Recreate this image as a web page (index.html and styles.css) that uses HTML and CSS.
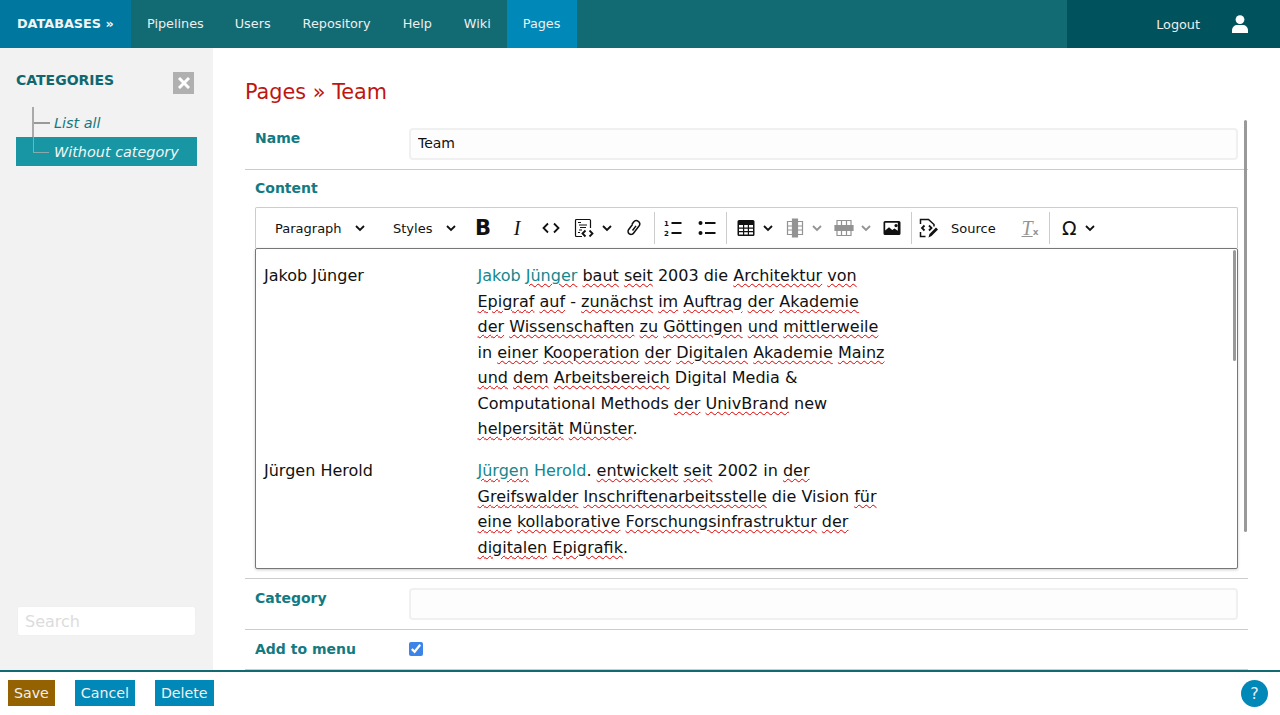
FILE: index.html
```html
<!DOCTYPE html>
<html lang="de">
<head>
    <meta charset="UTF-8">
    <meta name="viewport" content="width=device-width, initial-scale=1.0">
    <title>Pages » Team</title>
    <link rel="stylesheet" href="styles.css">
</head>
<body>
    <header class="topbar">
        <a class="brand">DATABASES »</a>
        <nav class="nav-main">
            <a>Pipelines</a>
            <a>Users</a>
            <a>Repository</a>
            <a>Help</a>
            <a>Wiki</a>
            <a class="active">Pages</a>
        </nav>
        <nav class="nav-user">
            <a>Logout</a>
            <svg class="user-icon" viewBox="0 0 16 18"><circle cx="8" cy="4.6" r="4.4"/><path d="M0 18v-2.5C0 12 2.5 10 5.5 10h5c3 0 5.500 2 5.500 5.500V18z"/></svg>
        </nav>
    </header>

    <div class="layout">
        <aside class="sidebar">
            <div class="side-head">
                <h2>CATEGORIES</h2>
                <button class="side-close"><svg viewBox="0 0 12 12"><path d="M1 1l10 10M11 1L1 11"/></svg></button>
            </div>
            <ul class="tree">
                <li>List all</li>
                <li class="selected">Without category</li>
            </ul>
            <input class="side-search" type="text" placeholder="Search">
        </aside>

        <main class="content">
            <h1 class="page-title">Pages » Team</h1>
            <form class="doc-form">
                <div class="row">
                    <label>Name</label>
                    <input class="field" type="text" value="Team">
                </div>
                <div class="row row-stack">
                    <label>Content</label>
                    <div class="toolbar">
                        <div class="drop drop-para">Paragraph<svg class="chev" viewBox="0 0 10 10"><path d="M1 3l4 4 4-4"/></svg></div>
                        <div class="drop drop-styles">Styles<svg class="chev" viewBox="0 0 10 10"><path d="M1 3l4 4 4-4"/></svg></div>
                        <div class="tool tool-b">B</div>
                        <div class="tool tool-i">I</div>
                        <div class="tool"><svg class="ico" viewBox="0 0 20 20"><path class="ln" d="M7 5.500L2.500 10 7 14.500M13 5.500l4.500 4.500-4.500 4.500"/></svg></div>
                        <div class="split split-code">
                            <svg class="ico" viewBox="0 0 20 20"><path class="thin" d="M8 18.500H2.500a1 1 0 0 1-1-1v-15a1 1 0 0 1 1-1h13a1 1 0 0 1 1 1V10"/><path class="thin" d="M4 4.500h3M5 7h8M6 9.500h6M5 12h3M4 14.500h2"/><path class="ln" d="M11.500 12.500l-3 3 3 3M15.500 12.500l3 3-3 3"/></svg>
                            <svg class="chev" viewBox="0 0 10 10"><path d="M1 3l4 4 4-4"/></svg>
                        </div>
                        <div class="tool"><svg class="ico" viewBox="0 0 20 20"><path class="mid" d="M8.500 6.500l-3.800 5a3 3 0 0 0 .6 4.300 3 3 0 0 0 4.200-.6l5.500-7.200a3.400 3.400 0 0 0-.7-4.700 3.400 3.400 0 0 0-4.700.7L8 6.200M8.500 12.500l3.500-4.600"/></svg></div>
                        <span class="sep"></span>
                        <div class="tool"><svg class="ico" viewBox="0 0 20 20"><text class="num" x="1" y="7.500">1</text><text class="num" x="1" y="17.500">2</text><path class="ln" d="M8.500 5h10M8.500 15h10"/></svg></div>
                        <div class="tool"><svg class="ico" viewBox="0 0 20 20"><circle cx="3.500" cy="5" r="2"/><circle cx="3.500" cy="15" r="2"/><path class="ln" d="M8 5h10.500M8 15h10.500"/></svg></div>
                        <span class="sep sep-tight"></span>
                        <div class="split">
                            <svg class="ico" viewBox="0 0 20 20"><path fill-rule="evenodd" d="M3 2h14a1.500 1.500 0 0 1 1.500 1.500v13A1.500 1.500 0 0 1 17 18H3a1.500 1.500 0 0 1-1.500-1.500v-13A1.500 1.500 0 0 1 3 2zM3 7v2.500h4V7zm5.200 0v2.500h3.600V7zM13 7v2.500h4V7zM3 10.700v2.300h4v-2.300zm5.200 0V13h3.600v-2.300zm4.800 0V13h4v-2.300zM3 14.200v2.300h4v-2.300zm5.200 0v2.300h3.600v-2.300zm4.800 0v2.300h4v-2.300z"/></svg>
                            <svg class="chev" viewBox="0 0 10 10"><path d="M1 3l4 4 4-4"/></svg>
                        </div>
                        <div class="split off">
                            <svg class="ico" viewBox="0 0 20 20"><rect x="7.500" y="1" width="5" height="18"/><path class="thin" d="M2.500 3.500h15v13h-15zM2.500 8h15M2.500 12h15M7.500 1h5v18h-5z"/></svg>
                            <svg class="chev" viewBox="0 0 10 10"><path d="M1 3l4 4 4-4"/></svg>
                        </div>
                        <div class="split off">
                            <svg class="ico" viewBox="0 0 20 20"><rect x="1" y="7.500" width="18" height="5"/><path class="thin" d="M3 2.500h14v15H3zM7.500 2.500v15M12.500 2.500v15M1 7.500h18v5H1z"/></svg>
                            <svg class="chev" viewBox="0 0 10 10"><path d="M1 3l4 4 4-4"/></svg>
                        </div>
                        <div class="tool"><svg class="ico" viewBox="0 0 20 20"><path fill-rule="evenodd" d="M3 3h14a1.500 1.500 0 0 1 1.500 1.500v11A1.500 1.500 0 0 1 17 17H3a1.500 1.500 0 0 1-1.500-1.500v-11A1.500 1.500 0 0 1 3 3zm.2 1.700v7.800l3.800-3.300 3.200 2.700 2.300-1.400 3.300 2.300V4.700zM14 6a1.600 1.600 0 1 1 0 3.200A1.600 1.600 0 0 1 14 6z"/></svg></div>
                        <span class="sep sep-tight"></span>
                        <div class="source">
                            <svg class="ico" viewBox="0 0 20 20"><path class="mid" d="M2.500 6V1.500h8l5.500 5v2M2.500 14v4.500h5"/><path class="ln" d="M6.500 7.500L4 10l2.500 2.500M11 7.500l2.500 2.500-2.500 2.500"/><path d="M10.500 19.500l1-3.500 6.500-6.500 2 2-6.500 6.500z"/></svg>
                            <span>Source</span>
                        </div>
                        <div class="tool tool-tx off"><span class="tx-t">T</span><span class="tx-x">x</span></div>
                        <span class="sep"></span>
                        <div class="split split-omega">
                            <span class="omega">Ω</span>
                            <svg class="chev" viewBox="0 0 10 10"><path d="M1 3l4 4 4-4"/></svg>
                        </div>
                    </div>
                    <div class="editor">
                        <div class="editor-row">
                            <div>Jakob Jünger</div>
                            <div><a class="ref">Jakob <span class="sp">Jünger</span></a> <span class="sp">baut</span> <span class="sp">seit</span> 2003 die <span class="sp">Architektur</span> <span class="sp">von</span> <span class="sp">Epigraf</span> <span class="sp">auf</span> - <span class="sp">zunächst</span> <span class="sp">im</span> <span class="sp">Auftrag</span> <span class="sp">der</span> <span class="sp">Akademie</span> <span class="sp">der</span> <span class="sp">Wissenschaften</span> <span class="sp">zu</span> <span class="sp">Göttingen</span> <span class="sp">und</span> <span class="sp">mittlerweile</span> in <span class="sp">einer</span> <span class="sp">Kooperation</span> <span class="sp">der</span> <span class="sp">Digitalen</span> <span class="sp">Akademie</span> <span class="sp">Mainz</span> <span class="sp">und</span> <span class="sp">dem</span> <span class="sp">Arbeitsbereich</span> Digital Media &amp; Computational Methods <span class="sp">der</span> <span class="sp">UnivBrand</span> new <span class="sp">helpersität</span> <span class="sp">Münster</span>.</div>
                        </div>
                        <div class="editor-row">
                            <div>Jürgen Herold</div>
                            <div><a class="ref"><span class="sp">Jürgen</span> Herold</a>. <span class="sp">entwickelt</span> <span class="sp">seit</span> 2002 in <span class="sp">der</span> <span class="sp">Greifswalder</span> <span class="sp">Inschriftenarbeitsstelle</span> die Vision <span class="sp">für</span> <span class="sp">eine</span> <span class="sp">kollaborative</span> <span class="sp">Forschungsinfrastruktur</span> <span class="sp">der</span> <span class="sp">digitalen</span> <span class="sp">Epigrafik</span>.</div>
                        </div>
                        <span class="scroll-inner"></span>
                    </div>
                </div>
                <div class="row">
                    <label>Category</label>
                    <input class="field" type="text">
                </div>
                <div class="row row-check">
                    <label>Add to menu</label>
                    <input class="check" type="checkbox" checked>
                </div>
            </form>
            <span class="scroll-outer"></span>
        </main>
    </div>

    <footer class="actions">
        <button class="btn btn-save">Save</button>
        <button class="btn">Cancel</button>
        <button class="btn">Delete</button>
        <button class="help">?</button>
    </footer>
</body>
</html>
```

FILE: styles.css
```css
* {
    padding: 0;
    margin: 0;
    box-sizing: border-box;
    font-family: "DejaVu Sans", sans-serif;
}
:root {
    --teal: #126a73;
    --teal-dark: #00535c;
    --teal-text: #137a82;
    --blue: #0088b8;
}
body {
    height: 100vh;
    display: flex;
    flex-direction: column;
    overflow: hidden;
    background: #fff;
    color: #111;
}

/* top bar */
.topbar {
    height: 48px;
    flex: none;
    display: flex;
    background: var(--teal);
    font-size: 12.8px;
    color: #eee;
}
.brand {
    width: 131px;
    padding-left: 17px;
    line-height: 48px;
    font-weight: bold;
    color: #f4f4f4;
    background: #00779f;
}
.nav-main {
    flex: 1;
    display: flex;
}
.nav-main a {
    padding: 0 16px;
    line-height: 48px;
}
.nav-main a:first-child {
    padding-right: 15px;
}
.nav-main a.active {
    padding-right: 17px;
    background: var(--blue);
}
.nav-user {
    width: 213px;
    display: flex;
    align-items: center;
    justify-content: flex-end;
    padding-right: 32px;
    background: var(--teal-dark);
}
.user-icon {
    width: 16px;
    height: 18px;
    margin-left: 32px;
    fill: #fff;
}

/* sidebar */
.layout {
    flex: 1;
    min-height: 0;
    display: flex;
}
.sidebar {
    width: 213px;
    flex: none;
    display: flex;
    flex-direction: column;
    padding: 24px 16px 34px;
    background: #f2f2f2;
}
.side-head {
    display: flex;
    justify-content: space-between;
    padding-right: 3px;
}
.side-head h2 {
    font-size: 14px;
    line-height: 17px;
    color: #0f6870;
}
.side-close {
    width: 21px;
    height: 22px;
    border: 0;
    background: #b0b0b0;
    display: flex;
    align-items: center;
    justify-content: center;
}
.side-close svg {
    width: 12px;
    height: 12px;
    fill: none;
    stroke: #fff;
    stroke-width: 3;
}
.tree {
    list-style: none;
    margin-top: 14px;
    flex: 1;
    font-size: 14.4px;
    font-style: italic;
    color: var(--teal-text);
}
.tree li {
    position: relative;
    height: 29px;
    line-height: 29px;
    padding-top: 1px;
    padding-left: 38px;
}
.tree li::before {
    content: "";
    position: absolute;
    left: 16px;
    top: -1px;
    width: 16px;
    height: 15px;
    border-left: 2px solid #aaa;
    border-bottom: 2px solid #999;
}
.tree li:first-child::after {
    content: "";
    position: absolute;
    left: 16px;
    top: 14px;
    height: 15px;
    border-left: 2px solid #aaa;
}
.tree li.selected {
    width: 181px;
    color: #f4f4f4;
    background: #1896a3;
}
.tree li.selected::before {
    border-left-width: 1px;
    border-bottom-width: 1px;
    border-color: #8aa;
    top: 0;
    left: 17px;
    width: 15px;
}
.side-search {
    width: 179px;
    height: 30px;
    margin-left: 1px;
    padding: 0 7px;
    flex: none;
    font-size: 16px;
    background: #fff;
    border: 1px solid #f0f0f0;
    border-radius: 3px;
}
.side-search::placeholder {
    color: #dcdcdc;
}

/* form */
.content {
    flex: 1;
    min-width: 0;
    position: relative;
    overflow: hidden;
    padding: 32px 32px 0;
}
.page-title {
    font-size: 20.8px;
    font-weight: normal;
    line-height: 24px;
    margin-bottom: 15px;
    color: #c0150f;
}
.row {
    display: flex;
    padding: 9px 10px;
    border-bottom: 1px solid #ccc;
}
.row label {
    width: 154px;
    flex: none;
    font-size: 14px;
    font-weight: bold;
    line-height: 20px;
    color: var(--teal-text);
}
.row-stack {
    display: block;
    padding-top: 8px;
}
.row-stack label {
    display: block;
}
.row-check {
    align-items: center;
    padding-bottom: 10px;
}
.field {
    flex: 1;
    height: 32px;
    padding: 0 7px 2px;
    font-size: 14px;
    color: #111;
    background: #fdfdfd;
    border: 2px solid #f0f0f0;
    border-radius: 4px;
}
.check {
    width: 14px;
    height: 14px;
    accent-color: #3c84e8;
}

/* editor toolbar */
.toolbar {
    height: 41px;
    margin-top: 9px;
    padding-left: 7px;
    display: flex;
    align-items: center;
    font-size: 13px;
    color: #111;
    background: #fff;
    border: 1px solid #ccc;
    border-bottom: 0;
    border-radius: 2px 2px 0 0;
}
.drop {
    display: flex;
    align-items: center;
    justify-content: space-between;
    padding-left: 12px;
}
.drop-para {
    width: 118px;
    padding-right: 16px;
}
.drop-styles {
    width: 85px;
    padding-right: 10px;
}
.tool {
    width: 34px;
    height: 32px;
    flex: none;
    display: flex;
    align-items: center;
    justify-content: center;
}
.tool-b {
    font-size: 21px;
    font-weight: bold;
}
.tool-i {
    font-family: "Liberation Serif", serif;
    font-size: 20px;
    font-style: italic;
}
.tool-tx {
    width: 32px;
    align-items: baseline;
    padding-top: 5px;
}
.tx-t {
    font-family: "Liberation Serif", serif;
    font-size: 20px;
    font-style: italic;
    text-decoration: underline;
    text-decoration-thickness: 1px;
}
.tx-x {
    font-size: 9px;
    font-weight: bold;
}
.off {
    opacity: 0.45;
}
.split {
    height: 32px;
    flex: none;
    display: flex;
    align-items: center;
    gap: 7px;
    padding: 0 4px 0 8px;
}
.split-code {
    gap: 8px;
    padding: 0 5px 0 6px;
}
.split-omega {
    gap: 8px;
    padding-left: 11px;
}
.omega {
    font-size: 19px;
}
.source {
    width: 101px;
    height: 32px;
    flex: none;
    display: flex;
    align-items: center;
    gap: 13px;
    padding-left: 5px;
}
.sep {
    width: 1px;
    height: 32px;
    flex: none;
    margin: 0 1px 0 3px;
    background: #ccc;
}
.sep-tight {
    margin-left: 2px;
}
.ico {
    width: 20px;
    height: 20px;
    flex: none;
    fill: #111;
}
.ico .ln {
    fill: none;
    stroke: #111;
    stroke-width: 1.8;
}
.ico .mid {
    fill: none;
    stroke: #111;
    stroke-width: 1.5;
}
.ico .thin {
    fill: none;
    stroke: #111;
    stroke-width: 1.2;
}
.ico .num {
    font-size: 7px;
    font-weight: bold;
}
.chev {
    width: 10px;
    height: 10px;
    flex: none;
    fill: none;
    stroke: #111;
    stroke-width: 1.8;
}

/* editor body */
.editor {
    position: relative;
    height: 321px;
    overflow: hidden;
    padding: 14px 8px 0;
    font-size: 16px;
    line-height: 25.5px;
    background: #fff;
    border: 1px solid #777;
    border-radius: 2px;
    box-shadow: 0 1px 3px rgba(0, 0, 0, 0.2);
}
.editor-row {
    display: grid;
    grid-template-columns: 213.5px 410px;
    margin-bottom: 16.5px;
}
.ref {
    color: #14878f;
}
.sp {
    text-decoration: underline wavy #e00000 1px;
    text-underline-offset: 2px;
}
.scroll-inner {
    position: absolute;
    top: 1px;
    right: 1px;
    width: 3px;
    height: 111px;
    border-radius: 2px;
    background: #999;
}
.scroll-outer {
    position: absolute;
    top: 72px;
    right: 33px;
    width: 3px;
    height: 412px;
    border-radius: 2px;
    background: #999;
}

/* footer */
.actions {
    height: 45px;
    flex: none;
    display: flex;
    align-items: flex-start;
    gap: 20px;
    padding: 8px 12px 0 8px;
    background: #fff;
    border-top: 2px solid var(--teal);
}
.btn {
    height: 26px;
    padding: 0 6px;
    border: 0;
    font-size: 14.2px;
    color: #f0f0f0;
    background: var(--blue);
}
.btn-save {
    background: #946200;
}
.help {
    width: 27px;
    height: 27px;
    margin-left: auto;
    border: 0;
    border-radius: 50%;
    font-size: 16px;
    color: #eee;
    background: var(--blue);
}
```
